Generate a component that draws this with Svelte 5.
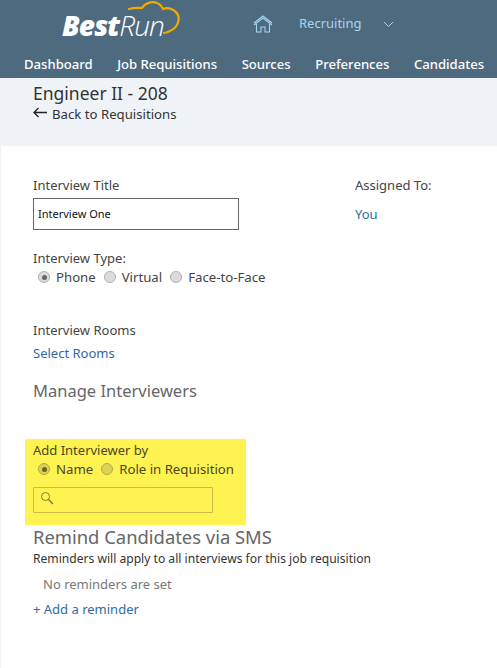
<script>
  const navItems = ['Dashboard', 'Job Requisitions', 'Sources', 'Preferences', 'Candidates'];
</script>

<div class="page">
  <header class="header">
    <div class="top">
      <div class="logo">
        <svg class="cloud" viewBox="0 0 60 36" width="60" height="36" aria-hidden="true">
          <path d="M1 9 C8 7 11 8 14 8 C17 3 24 1 29 3 C32 4 34 7 35 9 C40 7 47 9 50 15 C52 21 49 28 42 31 C40 32 38 33 36 33" fill="none" stroke="#f0ab00" stroke-width="2.2" stroke-linecap="round"/>
        </svg>
        <span class="best">Best</span><span class="run">Run</span>
      </div>
      <svg class="home" viewBox="0 0 20 18" width="20" height="18" aria-hidden="true">
        <path d="M1 8 L10 1 L19 8 M1 10 L10 3 L19 10 M3.5 9 V17 H8 V12 H12 V17 H16.5 V9" fill="none" stroke="#a5d3f2" stroke-width="1.1"/>
      </svg>
      <span class="recruiting">Recruiting</span>
      <svg class="chev" viewBox="0 0 11 7" width="11" height="7" aria-hidden="true">
        <path d="M1 1 L5.5 5.5 L10 1" fill="none" stroke="#a5d3f2" stroke-width="1"/>
      </svg>
    </div>
    <nav class="nav">
      {#each navItems as item}
        <span class="nav-item">{item}</span>
      {/each}
    </nav>
  </header>

  <section class="sub">
    <h1>Engineer II - 208</h1>
    <div class="back">
      <svg viewBox="0 0 14 11" width="14" height="11" aria-hidden="true">
        <path d="M14 5.5 H1 M5.5 1 L1 5.5 L5.5 10" fill="none" stroke="#222" stroke-width="1.3"/>
      </svg>
      <span>Back to Requisitions</span>
    </div>
  </section>

  <main class="main">
    <div class="title-row">
      <div class="title-col">
        <div class="label">Interview Title</div>
        <div class="input">Interview One</div>
      </div>
      <div class="assigned">
        <div class="label">Assigned To:</div>
        <div class="link you">You</div>
      </div>
    </div>

    <div class="type">
      <div class="label">Interview Type:</div>
      <div class="radios">
        <span class="radio on"></span><span class="rl">Phone</span>
        <span class="radio"></span><span class="rl">Virtual</span>
        <span class="radio"></span><span class="rl">Face-to-Face</span>
      </div>
    </div>

    <div class="rooms">
      <div class="label">Interview Rooms</div>
      <div class="link select">Select Rooms</div>
    </div>

    <h2 class="manage">Manage Interviewers</h2>

    <div class="highlight">
      <div class="label">Add Interviewer by</div>
      <div class="radios">
        <span class="radio on y"></span><span class="rl">Name</span>
        <span class="radio y"></span><span class="rl">Role in Requisition</span>
      </div>
      <div class="search">
        <svg viewBox="0 0 14 14" width="14" height="14" aria-hidden="true">
          <circle cx="5.5" cy="5.5" r="4" fill="none" stroke="#77712a" stroke-width="0.9"/>
          <path d="M8.5 8.5 L13 13" stroke="#77712a" stroke-width="1.2"/>
        </svg>
      </div>
    </div>

    <h2 class="remind">Remind Candidates via SMS</h2>
    <div class="note">Reminders will apply to all interviews for this job requisition</div>
    <div class="none">No reminders are set</div>
    <div class="link add">+ Add a reminder</div>
  </main>
</div>

<style>
  :global(body) {
    margin: 0;
    background: #fff;
  }
  .page {
    width: 497px;
    height: 668px;
    overflow: hidden;
    font-family: "Noto Sans", "Open Sans", sans-serif;
    font-size: 13px;
    color: #333;
    background: #fff;
  }
  .header {
    height: 78px;
    background: #4e6a7f;
    display: flex;
    flex-direction: column;
  }
  .top {
    height: 48px;
    display: flex;
    align-items: center;
    position: relative;
  }
  .logo {
    margin-left: 62px;
    width: 191px;
    font-family: "Open Sans", sans-serif;
    font-size: 28px;
    line-height: 1;
    color: #fff;
    position: relative;
    letter-spacing: -0.9px;
    padding-top: 1px;
  }
  .cloud {
    position: absolute;
    left: 66px;
    top: -10px;
    width: 60px;
    height: 36px;
  }
  .best {
    font-weight: 800;
    font-style: italic;
  }
  .run {
    font-weight: 300;
    font-style: italic;
  }
  .home {
    display: block;
  }
  .recruiting {
    margin-left: 26px;
    color: #a9d3f0;
    font-size: 13px;
    width: 84px;
    position: relative;
    top: -1px;
  }
  .nav {
    display: flex;
    gap: 24.5px;
    padding: 2px 0 0 24px;
    height: 30px;
    box-sizing: border-box;
    align-items: center;
    white-space: nowrap;
  }
  .nav-item {
    color: #fff;
    font-size: 13.1px;
    font-weight: 500;
  }
  .sub {
    height: 68px;
    background: #eff3f8;
    padding-left: 33px;
    box-sizing: border-box;
    padding-top: 4px;
  }
  h1 {
    margin: 0;
    font-size: 17.5px;
    font-weight: 400;
    line-height: 22px;
    color: #333;
  }
  .back {
    display: flex;
    align-items: center;
    gap: 5px;
    font-size: 13.2px;
    line-height: 18px;
    margin-top: 1px;
    color: #333;
  }
  .back svg {
    margin-bottom: 3px;
  }
  .main {
    padding: 30px 0 0 32px;
    border-left: 1px solid #eff3f8;
    height: 522px;
    box-sizing: border-box;
  }
  .label {
    font-size: 13px;
    line-height: 18px;
    color: #444;
  }
  .title-row {
    display: flex;
  }
  .title-col {
    width: 322px;
  }
  .input {
    width: 200px;
    height: 30px;
    border: 1px solid #666;
    margin-top: 4px;
    font-size: 11px;
    line-height: 30px;
    padding-left: 4px;
    color: #111;
  }
  .assigned .you {
    margin-top: 11px;
  }
  .link {
    color: #2f6b9f;
    font-size: 13px;
    line-height: 18px;
  }
  .type {
    margin-top: 19px;
  }
  .radios {
    display: flex;
    align-items: center;
    height: 20px;
    padding-left: 5px;
  }
  .radio {
    width: 12px;
    height: 12px;
    box-sizing: border-box;
    border-radius: 50%;
    border: 1px solid #b0b0b0;
    background: #dcdcdc;
    position: relative;
    margin-right: 6px;
  }
  .radio.on::after {
    content: "";
    position: absolute;
    left: 2.5px;
    top: 2.5px;
    width: 5px;
    height: 5px;
    border-radius: 50%;
    background: #666;
  }
  .radio.y {
    background: #dcd355;
    border-color: #b3ab45;
  }
  .radio.y.on::after {
    background: #6b6620;
  }
  .rl {
    margin-right: 8px;
    font-size: 13.2px;
    color: #444;
  }
  .rooms {
    margin-top: 34px;
  }
  .select {
    margin-top: 5px;
  }
  h2 {
    margin: 0;
    font-weight: 400;
    line-height: 22px;
    color: #666;
  }
  .manage {
    margin-top: 18px;
    font-size: 16.5px;
  }
  .highlight {
    margin: 37px 0 0 -8px;
    width: 221px;
    height: 86px;
    box-sizing: border-box;
    background: #fff352;
    padding: 2px 0 0 8px;
  }
  .highlight .label,
  .highlight .rl {
    color: #4a4620;
  }
  .search {
    margin-top: 8px;
    width: 180px;
    height: 26px;
    box-sizing: border-box;
    border: 1px solid #c9bd4a;
    border-radius: 1px;
    padding: 3px 0 0 6px;
  }
  .search svg {
    display: block;
  }
  .remind {
    margin-top: 1px;
    font-size: 18.4px;
  }
  .note {
    font-size: 12.1px;
    line-height: 17px;
    color: #333;
    margin-top: 2px;
  }
  .none {
    margin: 8px 0 0 10px;
    color: #777;
    line-height: 18px;
  }
  .add {
    margin-top: 7px;
  }
</style>
